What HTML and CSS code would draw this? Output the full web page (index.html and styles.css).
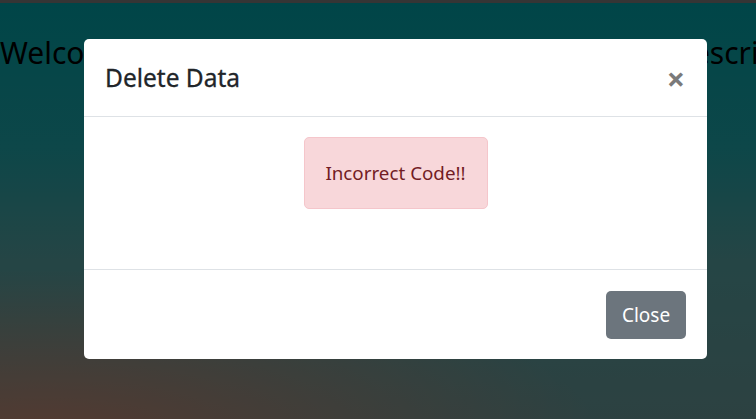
FILE: index.html
```html
<!DOCTYPE html>
<html>
<head>
<meta charset="utf-8">
<link rel="stylesheet" href="styles.css">
</head>
<body>
<div class="topbar"></div>
<div class="page">
  <div class="headline">
    <span class="left">Welcome Admin</span>
    <span class="right">Description</span>
  </div>
</div>
<div class="backdrop"></div>
<div class="modal">
  <div class="modal-header">
    <span class="modal-title">Delete Data</span>
    <span class="close">&times;</span>
  </div>
  <div class="modal-body">
    <div class="alert">Incorrect Code!!</div>
  </div>
  <div class="modal-footer">
    <button class="btn">Close</button>
  </div>
</div>
</body>
</html>
```
FILE: styles.css
```css
html, body {
  margin: 0;
  padding: 0;
  width: 756px;
  height: 419px;
  overflow: hidden;
}
body {
  font-family: "Noto Sans", "Open Sans", sans-serif;
  background:
    radial-gradient(ellipse 560px 170px at 40px 440px, rgba(175,115,95,0.95), rgba(175,115,95,0) 100%),
    linear-gradient(180deg, #008b90 0%, #1a8e92 35%, #4a8b8b 62%, #5a8383 100%);
  position: relative;
}
.topbar {
  height: 3px;
  background: #6a6a6a;
}
.page {
  padding-top: 33px;
}
.headline {
  display: flex;
  white-space: nowrap;
  overflow: hidden;
  font-size: 30px;
  color: #000;
  line-height: 34px;
}
.left {
  width: 671px;
  flex-shrink: 0;
  overflow: hidden;
}
.right {
  flex-shrink: 0;
}
.backdrop {
  position: absolute;
  left: 0;
  top: 0;
  width: 756px;
  height: 419px;
  background: rgba(0,0,0,0.5);
}
.modal {
  position: absolute;
  left: 84px;
  top: 39px;
  width: 623px;
  height: 320px;
  background: #fff;
  border-radius: 5px;
  display: flex;
  flex-direction: column;
}
.modal-header {
  display: flex;
  align-items: center;
  justify-content: space-between;
  height: 78px;
  padding: 0 22px 0 21px;
  border-bottom: 1px solid #dee2e6;
  box-sizing: border-box;
}
.modal-title {
  font-size: 24.5px;
  color: #212529;
  font-weight: 400;
  -webkit-text-stroke: 0.3px #212529;
}
.close {
  font-size: 32px;
  font-weight: 700;
  color: #7a7a7a;
  line-height: 1;
  margin-top: 2px;
}
.modal-body {
  height: 152px;
  box-sizing: border-box;
  padding-top: 20px;
  display: flex;
  justify-content: center;
  align-items: flex-start;
}
.alert {
  width: 184px;
  height: 72px;
  box-sizing: border-box;
  background: #f8d7da;
  border: 1px solid #f5c6cb;
  border-radius: 5px;
  color: #721c24;
  font-size: 18.8px;
  display: flex;
  align-items: center;
  justify-content: center;
}
.modal-footer {
  flex: 1;
  border-top: 1px solid #dee2e6;
  display: flex;
  justify-content: flex-end;
  align-items: center;
  padding-right: 21px;
}
.btn {
  width: 80px;
  height: 48px;
  background: #6c757d;
  color: #fff;
  border: none;
  border-radius: 5px;
  font-family: "Noto Sans", "Open Sans", sans-serif;
  font-size: 19px;
  padding: 0;
}
```
